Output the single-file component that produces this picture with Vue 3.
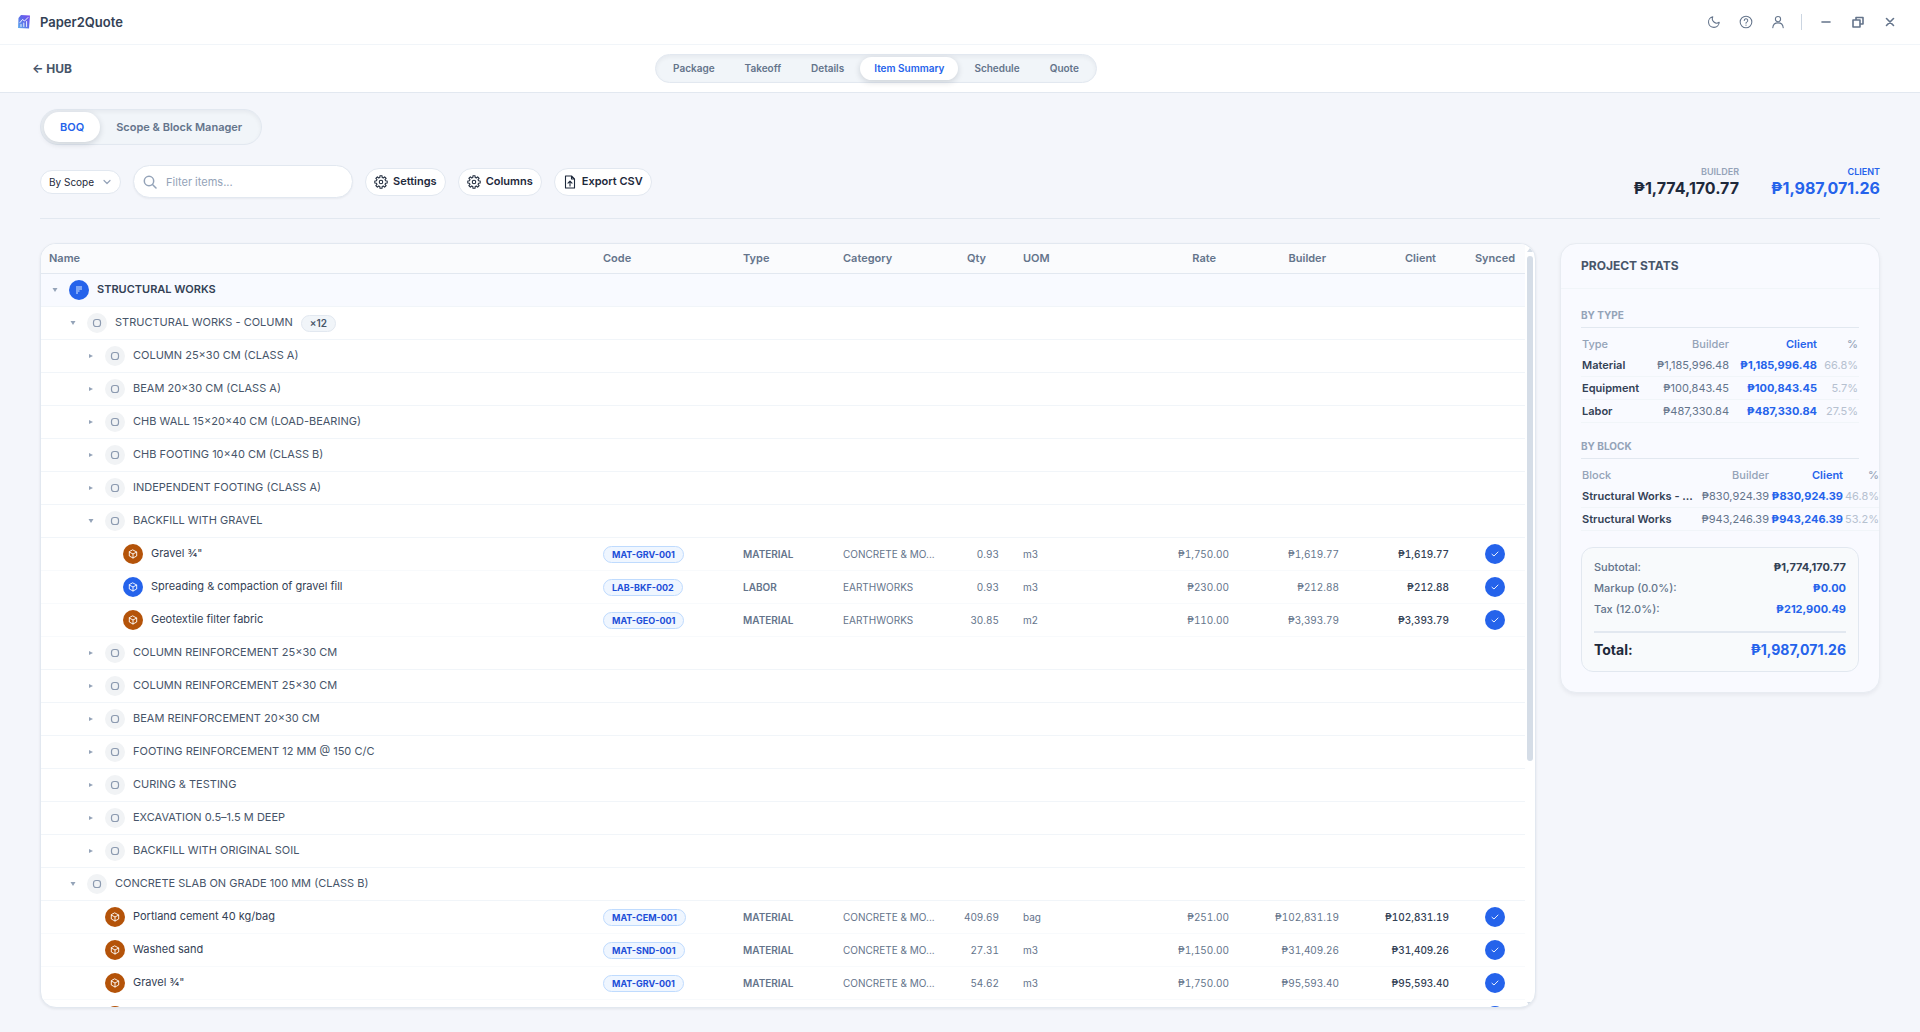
<script setup>
import { ref } from 'vue'

const steps = ['Package', 'Takeoff', 'Details', 'Item Summary', 'Schedule', 'Quote']
const activeStep = ref('Item Summary')
const activeView = ref('BOQ')
const grouping = ref('By Scope')
const filter = ref('')

const group = (level, name, open = false, badge = '') => ({ kind: level ? 'block' : 'scope', level, name, open, badge })
const item = (level, name, code, type, category, qty, uom, rate, total) => ({
  kind: 'item', level, name, code, type, category, qty, uom, rate, total
})

const rows = [
  group(0, 'STRUCTURAL WORKS', true),
  group(1, 'STRUCTURAL WORKS - COLUMN', true, '×12'),
  group(2, 'COLUMN 25×30 CM (CLASS A)'),
  group(2, 'BEAM 20×30 CM (CLASS A)'),
  group(2, 'CHB WALL 15×20×40 CM (LOAD-BEARING)'),
  group(2, 'CHB FOOTING 10×40 CM (CLASS B)'),
  group(2, 'INDEPENDENT FOOTING (CLASS A)'),
  group(2, 'BACKFILL WITH GRAVEL', true),
  item(3, 'Gravel ¾"', 'MAT-GRV-001', 'MATERIAL', 'CONCRETE & MO...', '0.93', 'm3', '₱1,750.00', '₱1,619.77'),
  item(3, 'Spreading & compaction of gravel fill', 'LAB-BKF-002', 'LABOR', 'EARTHWORKS', '0.93', 'm3', '₱230.00', '₱212.88'),
  item(3, 'Geotextile filter fabric', 'MAT-GEO-001', 'MATERIAL', 'EARTHWORKS', '30.85', 'm2', '₱110.00', '₱3,393.79'),
  group(2, 'COLUMN REINFORCEMENT 25×30 CM'),
  group(2, 'COLUMN REINFORCEMENT 25×30 CM'),
  group(2, 'BEAM REINFORCEMENT 20×30 CM'),
  group(2, 'FOOTING REINFORCEMENT 12 MM @ 150 C/C'),
  group(2, 'CURING & TESTING'),
  group(2, 'EXCAVATION 0.5–1.5 M DEEP'),
  group(2, 'BACKFILL WITH ORIGINAL SOIL'),
  group(1, 'CONCRETE SLAB ON GRADE 100 MM (CLASS B)', true),
  item(2, 'Portland cement 40 kg/bag', 'MAT-CEM-001', 'MATERIAL', 'CONCRETE & MO...', '409.69', 'bag', '₱251.00', '₱102,831.19'),
  item(2, 'Washed sand', 'MAT-SND-001', 'MATERIAL', 'CONCRETE & MO...', '27.31', 'm3', '₱1,150.00', '₱31,409.26'),
  item(2, 'Gravel ¾"', 'MAT-GRV-001', 'MATERIAL', 'CONCRETE & MO...', '54.62', 'm3', '₱1,750.00', '₱95,593.40'),
  item(2, '', '', '', '', '', '', '', '')
]

const byType = [
  ['Material', '₱1,185,996.48', '₱1,185,996.48', '66.8%'],
  ['Equipment', '₱100,843.45', '₱100,843.45', '5.7%'],
  ['Labor', '₱487,330.84', '₱487,330.84', '27.5%']
]
const byBlock = [
  ['Structural Works - ...', '₱830,924.39', '₱830,924.39', '46.8%'],
  ['Structural Works', '₱943,246.39', '₱943,246.39', '53.2%']
]

// Outline of an eight-toothed gear centred in a 24-unit box.
const gear = (() => {
  const points = []
  for (let tooth = 0; tooth < 8; tooth++) {
    const mid = (tooth * Math.PI) / 4
    for (const [offset, radius] of [[-0.25, 8], [-0.17, 10.8], [0.17, 10.8], [0.25, 8]]) {
      points.push(`${(12 + radius * Math.sin(mid + offset)).toFixed(2)} ${(12 - radius * Math.cos(mid + offset)).toFixed(2)}`)
    }
  }
  return `M${points.join('L')}Z`
})()
</script>

<template>
  <div class="app">
    <header class="titlebar">
      <div class="brand">
        <svg width="14" height="16" viewBox="0 0 14 16" aria-hidden="true">
          <defs>
            <linearGradient id="logo" x1="1" y1="0" x2="0" y2="1">
              <stop offset="0" stop-color="#7c4df0" /><stop offset="0.5" stop-color="#5b6ce8" /><stop offset="1" stop-color="#63b3ee" />
            </linearGradient>
          </defs>
          <path d="M4 1 L13 1.500 L12 14.500 L1 14 L1.500 4 Z" fill="url(#logo)" />
          <path d="M3 8.500 L5.500 5.500 L7.500 7 L11 3.500 M4 12.500 V10.500 M6.800 12.500 V9 M9.600 12.500 V7.500" fill="none" stroke="#fff" stroke-width="0.9" />
        </svg>
        <span>Paper2Quote</span>
      </div>
      <div class="window-tools">
        <button aria-label="Dark mode"><svg width="14" height="14" viewBox="0 0 24 24"><path d="M10 3a7.500 7.500 0 0 0 11 9.500A9.200 9.200 0 1 1 10 3z" /></svg></button>
        <button aria-label="Help"><svg width="14" height="14" viewBox="0 0 24 24"><circle cx="12" cy="12" r="10" /><path d="M9 9.500a3 3 0 1 1 4.300 2.700c-.9.400-1.300.9-1.300 1.800M12 17v.6" /></svg></button>
        <button aria-label="Account"><svg width="14" height="14" viewBox="0 0 24 24"><circle cx="12" cy="7" r="4.500" /><path d="M3 22c.5-5.500 4-8.500 9-8.500s8.500 3 9 8.500" /></svg></button>
        <span class="tool-divider"></span>
        <button aria-label="Minimize"><svg width="12" height="12" viewBox="0 0 12 12" class="win"><path d="M2 6h8" /></svg></button>
        <button aria-label="Restore"><svg width="12" height="12" viewBox="0 0 12 12" class="win"><path d="M1 4h7v7H1zM4 4V1.500h7V8H8" /></svg></button>
        <button aria-label="Close"><svg width="12" height="12" viewBox="0 0 12 12" class="win"><path d="M2.500 2.500l7 7M9.500 2.500l-7 7" /></svg></button>
      </div>
    </header>

    <nav class="navbar">
      <a href="#hub" class="hub">← HUB</a>
      <div class="pill steps">
        <button v-for="s in steps" :key="s" :class="{ active: s === activeStep }" @click="activeStep = s">{{ s }}</button>
      </div>
      <span class="nav-end"></span>
    </nav>

    <main>
      <div class="pill views">
        <button v-for="v in ['BOQ', 'Scope & Block Manager']" :key="v" :class="{ active: v === activeView }" @click="activeView = v">{{ v }}</button>
      </div>

      <div class="toolbar">
        <div class="select">
          <select v-model="grouping" aria-label="Grouping"><option>By Scope</option></select>
          <svg width="8" height="8" viewBox="0 0 8 8"><path d="M1 2.500l3 3 3-3" /></svg>
        </div>
        <label class="search">
          <svg width="14" height="14" viewBox="0 0 14 14"><circle cx="6" cy="6" r="4.700" /><path d="M9.500 9.500l3.500 3.500" /></svg>
          <input v-model="filter" type="text" placeholder="Filter items..." aria-label="Filter items" />
        </label>
        <button v-for="b in ['Settings', 'Columns']" :key="b" class="btn">
          <svg width="14" height="14" viewBox="0 0 24 24"><circle cx="12" cy="12" r="3" /><path :d="gear" /></svg>
          <span>{{ b }}</span>
        </button>
        <button class="btn">
          <svg class="file" width="14" height="14" viewBox="0 0 14 14"><path d="M2.500 1h6l3 3v9h-9zM8.500 1v3h3M7 11V6.500M5 8.200l2-2 2 2" /></svg>
          <span>Export CSV</span>
        </button>
        <dl class="totals">
          <div><dt>BUILDER</dt><dd>₱1,774,170.77</dd></div>
          <div class="client"><dt>CLIENT</dt><dd>₱1,987,071.26</dd></div>
        </dl>
      </div>

      <div class="content">
        <section class="sheet">
          <div class="viewport">
            <table class="boq">
              <colgroup>
                <col /><col class="w-code" /><col class="w-type" /><col class="w-cat" /><col class="w-qty" />
                <col class="w-uom" /><col class="w-num" /><col class="w-num" /><col class="w-num" /><col class="w-sync" />
              </colgroup>
              <thead>
                <tr>
                  <th>Name</th><th>Code</th><th>Type</th><th>Category</th><th class="num">Qty</th><th>UOM</th>
                  <th class="num">Rate</th><th class="num">Builder</th><th class="num">Client</th><th class="sync">Synced</th>
                </tr>
              </thead>
              <tbody>
                <tr v-for="(r, i) in rows" :key="i" :class="r.kind">
                  <td :colspan="r.kind === 'item' ? 1 : 10">
                    <div class="name" :class="'level-' + r.level">
                      <svg v-if="r.kind !== 'item'" class="caret" width="6" height="6" viewBox="0 0 6 6">
                        <path v-if="r.open" d="M0.500 1h5L3 5z" /><path v-else d="M1 1v4L5 3z" />
                      </svg>
                      <span v-else class="caret"></span>
                      <span class="dot" :class="{ labor: r.type === 'LABOR' }">
                        <svg v-if="r.kind === 'scope'" width="8" height="8" viewBox="0 0 8 8"><path d="M1 1h6M1 3h6M1 5h3.500M1 7h2" /></svg>
                        <svg v-else-if="r.kind === 'block'" width="10" height="10" viewBox="0 0 10 10"><rect x="1.500" y="1.500" width="7" height="7" rx="2.500" /></svg>
                        <svg v-else width="10" height="10" viewBox="0 0 10 10"><path d="M5 1l3.700 2v4L5 9 1.300 7V3zM1.300 3L5 5l3.700-2M5 5v4" /></svg>
                      </span>
                      <span class="label">{{ r.name }}</span>
                      <span v-if="r.badge" class="badge">{{ r.badge }}</span>
                    </div>
                  </td>
                  <template v-if="r.kind === 'item'">
                    <td><span v-if="r.code" class="code">{{ r.code }}</span></td>
                    <td class="type">{{ r.type }}</td>
                    <td>{{ r.category }}</td>
                    <td class="num">{{ r.qty }}</td>
                    <td>{{ r.uom }}</td>
                    <td class="num">{{ r.rate }}</td>
                    <td class="num">{{ r.total }}</td>
                    <td class="num strong">{{ r.total }}</td>
                    <td class="sync"><span class="check"><svg width="8" height="8" viewBox="0 0 8 8"><path d="M1 4.300l2 1.700 4-4" /></svg></span></td>
                  </template>
                </tr>
              </tbody>
            </table>
          </div>
          <div class="scrollbar" aria-hidden="true">
            <svg width="6" height="4" viewBox="0 0 6 4"><path d="M3 0l3 4H0z" /></svg>
            <div class="track"><div class="thumb"></div></div>
            <svg width="6" height="4" viewBox="0 0 6 4"><path d="M3 4l3-4H0z" /></svg>
          </div>
        </section>

        <aside class="stats">
          <h2>PROJECT STATS</h2>
          <div class="stats-body">
            <h3>BY TYPE</h3>
            <table class="mini types">
              <colgroup><col /><col class="m-builder" /><col class="m-client" /><col class="m-pct" /></colgroup>
              <thead><tr><th>Type</th><th>Builder</th><th>Client</th><th>%</th></tr></thead>
              <tbody><tr v-for="r in byType" :key="r[0]"><td v-for="(c, i) in r" :key="i">{{ c }}</td></tr></tbody>
            </table>
            <h3>BY BLOCK</h3>
            <table class="mini blocks">
              <colgroup><col /><col class="m-builder" /><col class="m-client" /><col class="m-pct" /></colgroup>
              <thead><tr><th>Block</th><th>Builder</th><th>Client</th><th>%</th></tr></thead>
              <tbody><tr v-for="r in byBlock" :key="r[0]"><td v-for="(c, i) in r" :key="i">{{ c }}</td></tr></tbody>
            </table>
            <dl class="summary">
              <div><dt>Subtotal:</dt><dd class="dark">₱1,774,170.77</dd></div>
              <div><dt>Markup (0.0%):</dt><dd>₱0.00</dd></div>
              <div><dt>Tax (12.0%):</dt><dd>₱212,900.49</dd></div>
              <div class="total"><dt>Total:</dt><dd>₱1,987,071.26</dd></div>
            </dl>
          </div>
        </aside>
      </div>
    </main>
  </div>
</template>

<style>
body {
  margin: 0;
}
</style>

<style scoped>
* {
  box-sizing: border-box;
}
.app {
  display: flex;
  flex-direction: column;
  height: 100vh;
  background: #f4f6fb;
  color: #475569;
  font-family: Inter, "Liberation Sans", sans-serif;
  font-size: 11px;
}
button,
input,
select {
  font: inherit;
  color: inherit;
  border: 0;
  background: none;
  padding: 0;
  margin: 0;
}
button {
  cursor: pointer;
}
svg {
  display: block;
  flex: none;
  fill: none;
  stroke: currentColor;
  stroke-width: 2;
  stroke-linecap: round;
  stroke-linejoin: round;
}
dl,
dd,
h2,
h3 {
  margin: 0;
}

.titlebar {
  display: flex;
  align-items: center;
  justify-content: space-between;
  height: 45px;
  padding: 0 14px 0 17px;
  background: #fff;
  border-bottom: 1px solid #f1f5f9;
  flex: none;
}
.brand {
  display: flex;
  align-items: center;
  gap: 9px;
  color: #334155;
  font-size: 13px;
  font-weight: 600;
}
.brand svg {
  stroke: none;
}
.window-tools {
  display: flex;
  align-items: center;
  color: #64748b;
}
.window-tools button {
  display: grid;
  place-items: center;
  width: 32px;
  height: 28px;
}
.window-tools svg {
  stroke-width: 1.8;
}
.window-tools .win {
  stroke-width: 1.6;
}
.tool-divider {
  width: 1px;
  height: 16px;
  margin: 0 8px 0 7px;
  background: #cbd5e1;
}

.navbar {
  display: flex;
  align-items: center;
  justify-content: space-between;
  height: 48px;
  padding: 0 32px;
  background: #fff;
  border-bottom: 1px solid #e2e8f0;
  flex: none;
}
.hub {
  color: #475569;
  font-size: 12px;
  font-weight: 700;
  text-decoration: none;
}
.nav-end {
  width: 208px;
}
.pill {
  display: flex;
  padding: 2px 3px;
  background: #f1f5f9;
  border: 1px solid #e2e8f0;
  border-radius: 18px;
  box-shadow: inset 0 2px 4px rgba(15, 23, 42, 0.05);
}
.pill button {
  color: #64748b;
  font-weight: 600;
  border-radius: 15px;
}
.pill button.active {
  color: #2563eb;
  background: #fff;
  box-shadow: 0 2px 6px rgba(15, 23, 42, 0.16);
}
.steps {
  gap: 2px;
}
.steps button {
  height: 23px;
  padding: 0 14px 2px;
  font-size: 10px;
}

main {
  display: flex;
  flex-direction: column;
  flex: 1;
  min-height: 0;
  padding: 16px 40px 24px;
}
.views {
  align-self: flex-start;
}
.views button {
  height: 30px;
  padding: 0 16px;
}

.toolbar {
  display: flex;
  align-items: center;
  gap: 12px;
  padding: 20px 0;
  border-bottom: 1px solid #e2e8f0;
}
.select {
  position: relative;
  width: 81px;
}
.select select {
  appearance: none;
  display: block;
  width: 100%;
  height: 24px;
  padding: 0 8px;
  color: #1e293b;
  font-size: 10px;
  background: #fff;
  border: 1px solid #e2e8f0;
  border-radius: 12px;
}
.select svg {
  position: absolute;
  right: 10px;
  top: 8px;
  color: #94a3b8;
  stroke-width: 1.2;
}
.search {
  display: flex;
  align-items: center;
  gap: 9px;
  width: 220px;
  height: 33px;
  padding: 0 9px;
  background: #fff;
  border: 1px solid #e2e8f0;
  border-radius: 17px;
  box-shadow: 0 1px 2px rgba(15, 23, 42, 0.05);
}
.search svg {
  color: #94a3b8;
  stroke-width: 1.5;
}
.search input {
  flex: 1;
  min-width: 0;
  outline: none;
}
.search input::placeholder {
  color: #94a3b8;
}
.btn {
  display: flex;
  align-items: center;
  gap: 5px;
  height: 28px;
  padding: 0 8px;
  color: #1e293b;
  font-weight: 600;
  background: #fff;
  border: 1px solid #e2e8f0;
  border-radius: 14px;
}
.btn span {
  padding-bottom: 1px;
}
.btn svg {
  stroke-width: 1.8;
}
.btn .file {
  stroke-width: 1.1;
}
.totals {
  display: flex;
  gap: 32px;
  margin-left: auto;
  text-align: right;
}
.totals dt {
  color: #94a3b8;
  font-size: 9px;
  font-weight: 600;
  line-height: 12px;
}
.totals dd {
  color: #1e293b;
  font-size: 16px;
  font-weight: 700;
  line-height: 20px;
}
.totals .client dt,
.totals .client dd {
  color: #2563eb;
}

.content {
  display: flex;
  align-items: flex-start;
  gap: 24px;
  flex: 1;
  min-height: 0;
  padding-top: 24px;
}
.sheet {
  display: flex;
  flex: 1;
  min-width: 0;
  height: 100%;
  overflow: hidden;
  background: #fff;
  border: 1px solid #e2e8f0;
  border-radius: 16px;
  box-shadow: 0 1px 3px rgba(15, 23, 42, 0.08);
}
.viewport {
  flex: 1;
  min-width: 0;
  overflow: hidden;
}
.scrollbar {
  display: flex;
  flex-direction: column;
  align-items: center;
  gap: 4px;
  width: 10px;
  padding: 4px 0 1px;
}
.scrollbar svg {
  fill: #d5dde7;
  stroke: none;
}
.track {
  flex: 1;
}
.thumb {
  width: 6px;
  height: 68%;
  background: #d5dde7;
  border-radius: 3px;
}

.boq {
  width: 100%;
  table-layout: fixed;
  border-collapse: separate;
  border-spacing: 0;
}
.w-code { width: 140px; }
.w-type { width: 100px; }
.w-cat { width: 100px; }
.w-qty { width: 80px; }
.w-uom { width: 120px; }
.w-num { width: 110px; }
.w-sync { width: 60px; }
.boq th,
.boq td {
  padding: 0 0 0 8px;
  text-align: left;
  white-space: nowrap;
}
.boq th,
.boq th.sync {
  padding-bottom: 2px;
}
.boq th {
  height: 30px;
  color: #64748b;
  font-weight: 600;
  background: #fafbfd;
  border-bottom: 1px solid #e2e8f0;
}
.boq td {
  height: 33px;
  color: #64748b;
  font-size: 10px;
  border-bottom: 1px solid #f1f5f9;
}
.boq .item td {
  border-bottom-color: #f8fafc;
}
.boq .scope td {
  background: #f8faff;
}
.boq td.num {
  padding-right: 16px;
  text-align: right;
  font-variant-numeric: tabular-nums;
}
.boq th.num {
  padding-right: 29px;
  text-align: right;
}
.boq th.sync,
.boq td.sync {
  padding-left: 0;
  text-align: center;
}
.boq td.strong {
  color: #334155;
  font-weight: 500;
}
.boq td.type {
  font-weight: 600;
}
.name {
  display: flex;
  align-items: center;
  gap: 8px;
  color: #475569;
  font-size: 11px;
}
.label {
  padding-bottom: 2px;
}
.item .name {
  color: #334155;
}
.scope .name {
  color: #334155;
  font-weight: 600;
}
.level-1 { padding-left: 18px; }
.level-2 { padding-left: 36px; }
.level-3 { padding-left: 54px; }
.caret {
  width: 6px;
  margin: 0 3px;
  fill: #94a3b8;
  stroke: none;
}
.dot,
.check {
  display: inline-grid;
  place-items: center;
  flex: none;
  width: 20px;
  height: 20px;
  border-radius: 50%;
  color: #8c9ab0;
  background: #f1f3f5;
}
.dot svg {
  stroke-width: 1.2;
}
.scope .dot {
  color: #dbeafe;
  background: #2563eb;
}
.scope .dot svg {
  stroke-width: 1;
  stroke-linecap: butt;
}
.item .dot {
  color: #fff;
  background: #b45309;
}
.item .dot svg,
.check svg {
  stroke-width: 0.9;
}
.item .dot.labor,
.item .check {
  color: #fff;
  background: #2563eb;
}
.check {
  vertical-align: middle;
}
.badge,
.code {
  display: inline-block;
  height: 17px;
  padding: 0 8px;
  font-size: 10px;
  font-weight: 600;
  line-height: 15px;
  border: 1px solid #e2e8f0;
  border-radius: 9px;
  background: #f1f5f9;
}
.code {
  color: #1d4ed8;
  font-size: 9px;
  font-weight: 700;
  background: #eff6ff;
  border-color: #bfdbfe;
}

.stats {
  width: 320px;
  overflow: hidden;
  background: #f9faff;
  border: 1px solid #e8ecf2;
  border-radius: 16px;
  box-shadow: 0 2px 4px rgba(15, 23, 42, 0.06);
}
.stats h2 {
  padding: 0 20px;
  color: #475569;
  font-size: 12px;
  font-weight: 700;
  line-height: 44px;
  border-bottom: 1px solid #f1f5f9;
}
.stats-body {
  padding: 18px 20px 20px;
}
.stats h3 {
  margin-bottom: 8px;
  color: #94a3b8;
  font-size: 10px;
  font-weight: 700;
  line-height: 16px;
  padding-bottom: 4px;
  border-bottom: 1px solid #e2e8f0;
}
.mini {
  width: 100%;
  margin-bottom: 15px;
  table-layout: fixed;
  border-collapse: separate;
  border-spacing: 0;
}
.mini.blocks {
  width: 299px;
  margin-bottom: 16px;
}
.types .m-builder { width: 87px; }
.types .m-client { width: 88px; }
.types .m-pct { width: 41px; }
.blocks .m-builder { width: 77px; }
.blocks .m-client { width: 74px; }
.blocks .m-pct { width: 36px; }
.mini th,
.mini td {
  height: 23px;
  padding: 0 1px 1px;
  color: #64748b;
  text-align: right;
  white-space: nowrap;
  border-bottom: 1px solid #f1f5f9;
}
.mini th {
  height: 18px;
  padding-bottom: 2px;
  color: #94a3b8;
  font-weight: 500;
  border-bottom: 0;
}
.mini th:first-child,
.mini td:first-child {
  text-align: left;
}
.mini td:first-child {
  color: #334155;
  font-weight: 600;
}
.mini th:nth-child(3),
.mini td:nth-child(3) {
  color: #2563eb;
  font-weight: 600;
}
.mini td:nth-child(3) {
  font-weight: 700;
}
.mini td:nth-child(4) {
  color: #b6c1d0;
}
.summary {
  padding: 9px 12px 10px;
  background: #f8fafc;
  border: 1px solid #e2e8f0;
  border-radius: 12px;
  font-weight: 500;
}
.summary div {
  display: flex;
  justify-content: space-between;
  line-height: 21px;
  color: #64748b;
}
.summary dd {
  color: #2563eb;
  font-weight: 700;
}
.summary dd.dark {
  color: #334155;
}
.summary .total {
  margin-top: 11px;
  padding-top: 6px;
  border-top: 2px solid #e2e8f0;
  font-size: 14px;
  line-height: 22px;
  font-weight: 700;
}
.summary .total dt {
  color: #1e293b;
}
</style>
